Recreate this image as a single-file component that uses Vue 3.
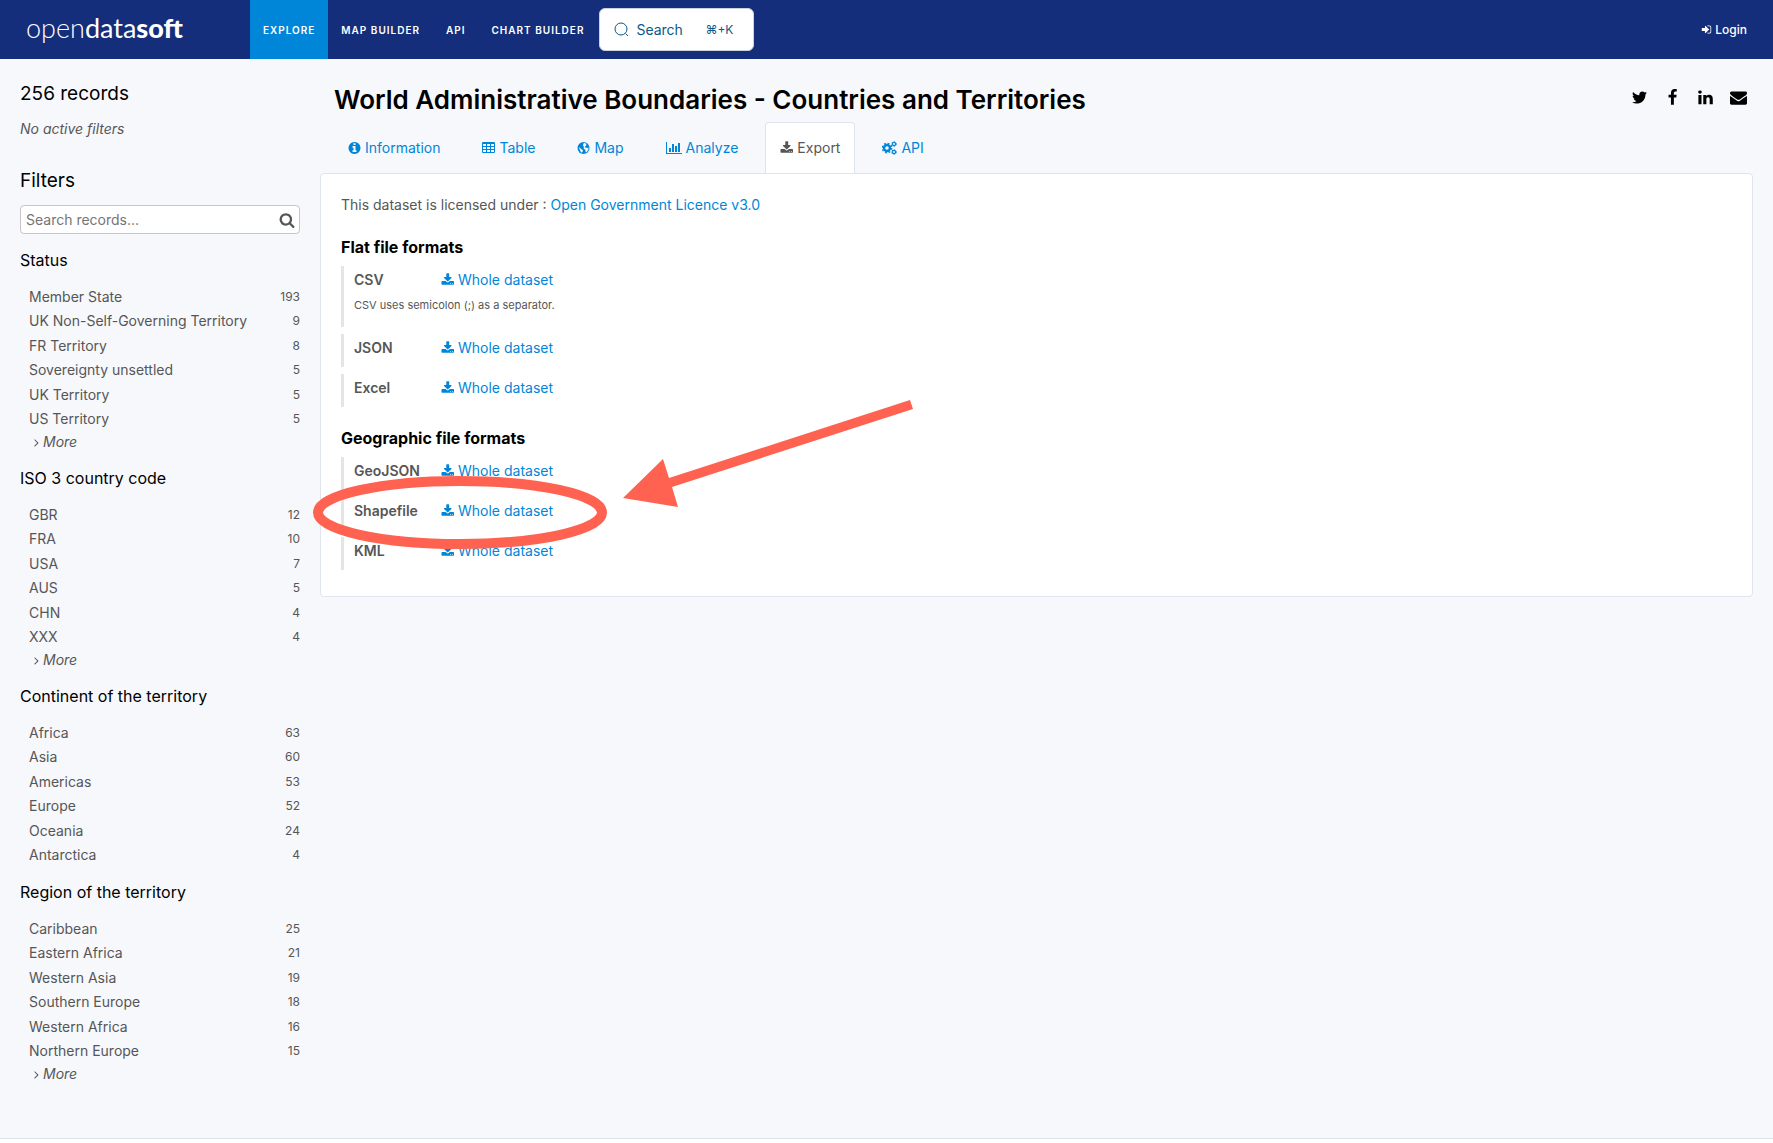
<script setup>
import { ref } from 'vue'

const query = ref('')

const icons = {
  twitter: 'M1684 408q-67 98-162 167 1 14 1 42 0 130-38 259.5t-115.5 248.5-184.5 210.5-258 146-323 54.5q-271 0-496-145 35 4 78 4 225 0 401-138-105-2-188-64.5t-114-159.5q33 5 61 5 43 0 85-11-112-23-185.5-111.5t-73.5-205.5v-4q68 38 146 41-66-44-105-115t-39-154q0-88 44-163 121 149 294.5 238.5t371.5 99.5q-8-38-8-74 0-134 94.5-228.5t228.5-94.5q140 0 236 102 109-21 205-78-37 115-142 178 93-10 186-50z',
  facebook: 'M1343 12v264h-157q-86 0-116 36t-30 108v189h293l-39 296h-254v759h-306v-759h-255v-296h255v-218q0-186 104-288.5t277-102.5q147 0 228 12z',
  linkedin: 'M477 625v991h-330v-991h330zm21-306q1 73-50.5 122t-135.5 49h-2q-82 0-132-49t-50-122q0-74 51.5-122.5t134.5-48.5 133 48.5 51 122.5zm1166 729v568h-329v-530q0-105-40.5-164.5t-126.5-59.5q-63 0-105.5 34.5t-63.5 85.5q-11 30-11 81v553h-329q2-399 2-647t-1-296l-1-48h329v144h-2q20-32 41-56t56.5-52 87-43.5 114.5-15.5q171 0 275 113.5t104 332.5z',
  envelope: 'M1792 710v794q0 66-47 113t-113 47h-1472q-66 0-113-47t-47-113v-794q44 49 101 87 362 246 497 345 57 42 92.5 65.5t94.5 48 110 24.5h2q51 0 110-24.5t94.5-48 92.5-65.5q170-123 498-345 57-39 100-87zm0-294q0 79-49 151t-122 123q-376 261-468 325-10 7-42.5 31t-54 38.5-52 32.5-57.5 27-50 9h-2q-23 0-50-9t-57.5-27-52-32.5-54-38.5-42.5-31q-91-64-262-182.5t-205-142.5q-62-42-117-115.5t-55-136.5q0-78 41.5-130t118.5-52h1472q65 0 112.5 47t47.5 113z',
  info: 'M1152 1376v-160q0-14-9-23t-23-9h-96v-512q0-14-9-23t-23-9h-320q-14 0-23 9t-9 23v160q0 14 9 23t23 9h96v320h-96q-14 0-23 9t-9 23v160q0 14 9 23t23 9h448q14 0 23-9t9-23zm-128-896v-160q0-14-9-23t-23-9h-192q-14 0-23 9t-9 23v160q0 14 9 23t23 9h192q14 0 23-9t9-23zm640 416q0 209-103 385.5t-279.5 279.5-385.5 103-385.5-103-279.5-279.5-103-385.5 103-385.5 279.5-279.5 385.5-103 385.5 103 279.5 279.5 103 385.5z',
  download: 'M1344 1344q0-26-19-45t-45-19-45 19-19 45 19 45 45 19 45-19 19-45zm256 0q0-26-19-45t-45-19-45 19-19 45 19 45 45 19 45-19 19-45zm128-224v320q0 40-28 68t-68 28h-1472q-40 0-68-28t-28-68v-320q0-40 28-68t68-28h465l135 136q58 56 136 56t136-56l136-136h464q40 0 68 28t28 68zm-325-569q17 41-14 70l-448 448q-18 19-45 19t-45-19l-448-448q-31-29-14-70 17-39 59-39h256v-448q0-26 19-45t45-19h256q26 0 45 19t19 45v448h256q42 0 59 39z',
  chart: 'M640 896v512h-256v-512h256zm384-512v1024h-256v-1024h256zm1024 1152v128h-2048v-1536h128v1408h1920zm-640-896v768h-256v-768h256zm384-384v1152h-256v-1152h256z',
  search: 'M1216 832q0-185-131.5-316.5t-316.5-131.5-316.5 131.5-131.5 316.5 131.5 316.5 316.5 131.5 316.5-131.5 131.5-316.5zm512 832q0 52-38 90t-90 38q-54 0-90-38l-343-342q-179 124-399 124-143 0-273.5-55.5t-225-150-150-225-55.5-273.5 55.5-273.5 150-225 225-150 273.5-55.5 273.5 55.5 225 150 150 225 55.5 273.5q0 220-124 399l343 343q37 37 37 90z',
  angle: 'M1171 960q0 13-10 23l-466 466q-10 10-23 10t-23-10l-50-50q-10-10-10-23t10-23l393-393-393-393q-10-10-10-23t10-23l50-50q10-10 23-10t23 10l466 466q10 10 10 23z',
  signin: 'M1312 896q0 26-19 45l-544 544q-19 19-45 19t-45-19-19-45v-288h-448q-26 0-45-19t-19-45v-384q0-26 19-45t45-19h448v-288q0-26 19-45t45-19 45 19l544 544q19 19 19 45zm352-352v704q0 119-84.5 203.5t-203.5 84.5h-320q-13 0-22.5-9.5t-9.5-22.5q0-4-1-20t-.5-26.5 3-23.5 10-19.5 20.5-6.5h320q66 0 113-47t47-113v-704q0-66-47-113t-113-47h-312l-11.5-1-11.5-3-8-5.5-7-9-2-13.5q0-4-1-20t-.5-26.5 3-23.5 10-19.5 20.5-6.5h320q119 0 203.5 84.5t84.5 203.5z',
}

const facets = [
  {
    title: 'Status',
    more: true,
    items: [['Member State', 193], ['UK Non-Self-Governing Territory', 9], ['FR Territory', 8], ['Sovereignty unsettled', 5], ['UK Territory', 5], ['US Territory', 5]],
  },
  {
    title: 'ISO 3 country code',
    more: true,
    items: [['GBR', 12], ['FRA', 10], ['USA', 7], ['AUS', 5], ['CHN', 4], ['XXX', 4]],
  },
  {
    title: 'Continent of the territory',
    more: false,
    items: [['Africa', 63], ['Asia', 60], ['Americas', 53], ['Europe', 52], ['Oceania', 24], ['Antarctica', 4]],
  },
  {
    title: 'Region of the territory',
    more: true,
    items: [['Caribbean', 25], ['Eastern Africa', 21], ['Western Asia', 19], ['Southern Europe', 18], ['Western Africa', 16], ['Northern Europe', 15]],
  },
]

const groups = [
  {
    title: 'Flat file formats',
    formats: [{ name: 'CSV', note: 'CSV uses semicolon (;) as a separator.' }, { name: 'JSON' }, { name: 'Excel' }],
  },
  {
    title: 'Geographic file formats',
    formats: [{ name: 'GeoJSON' }, { name: 'Shapefile' }, { name: 'KML' }],
  },
]

const shares = [
  { label: 'Twitter', icon: 'twitter' },
  { label: 'Facebook', icon: 'facebook' },
  { label: 'LinkedIn', icon: 'linkedin' },
  { label: 'Email', icon: 'envelope' },
]
</script>

<template>
  <div class="page">
    <header class="topbar">
      <a class="logo" href="#"><span class="logo-open">open</span><span class="logo-data">data</span><span class="logo-soft">soft</span></a>
      <nav class="menu">
        <a class="menu-item current" href="#">EXPLORE</a>
        <a class="menu-item" href="#">MAP BUILDER</a>
        <a class="menu-item" href="#">API</a>
        <a class="menu-item" href="#">CHART BUILDER</a>
      </nav>
      <button class="quick-search" type="button">
        <svg class="quick-icon" viewBox="0 0 15 15" aria-hidden="true">
          <circle cx="7" cy="7" r="6" />
          <path d="M11.6 11.6L14 14" />
        </svg>
        <span>Search</span>
        <span class="shortcut">⌘+K</span>
      </button>
      <a class="login" href="#">
        <svg class="login-icon" viewBox="0 0 1792 1792" aria-hidden="true"><path :d="icons.signin" /></svg>
        <span>Login</span>
      </a>
    </header>

    <div class="body">
      <aside class="sidebar">
        <h2 class="side-title">256 records</h2>
        <p class="no-filters">No active filters</p>
        <h2 class="side-title">Filters</h2>
        <form class="record-search" @submit.prevent>
          <input v-model="query" type="text" aria-label="Search records" placeholder="Search records..." />
          <button type="submit" aria-label="Search">
            <svg viewBox="0 0 1792 1792" aria-hidden="true"><path :d="icons.search" /></svg>
          </button>
        </form>
        <section v-for="facet in facets" :key="facet.title" class="facet">
          <h3>{{ facet.title }}</h3>
          <ul>
            <li v-for="[name, count] in facet.items" :key="name">
              <a href="#"><span>{{ name }}</span><span class="count">{{ count }}</span></a>
            </li>
          </ul>
          <a v-if="facet.more" class="more" href="#">
            <svg viewBox="0 0 1792 1792" aria-hidden="true"><path :d="icons.angle" /></svg>
            <span>More</span>
          </a>
        </section>
      </aside>

      <main class="content">
        <div class="heading">
          <h1>World Administrative Boundaries - Countries and Territories</h1>
          <div class="shares">
            <a v-for="s in shares" :key="s.icon" href="#" :aria-label="s.label">
              <svg viewBox="0 0 1792 1792" aria-hidden="true"><path :d="icons[s.icon]" /></svg>
            </a>
          </div>
        </div>

        <nav class="tabs">
          <a class="tab" href="#">
            <svg class="icon" viewBox="0 0 1536 1792" aria-hidden="true"><path transform="translate(-128 0)" :d="icons.info" /></svg>
            <span>Information</span>
          </a>
          <a class="tab" href="#">
            <svg class="icon" viewBox="0 0 13 14" aria-hidden="true">
              <path fill-rule="evenodd" d="M1 1h11a1 1 0 0 1 1 1v9a1 1 0 0 1-1 1H1a1 1 0 0 1-1-1V2a1 1 0 0 1 1-1zM1 3v2h3V3zM5 3v2h3V3zM9 3v2h3V3zM1 6v2h3V6zM5 6v2h3V6zM9 6v2h3V6zM1 9v2h3V9zM5 9v2h3V9zM9 9v2h3V9z" />
            </svg>
            <span>Table</span>
          </a>
          <a class="tab" href="#">
            <svg class="icon" viewBox="0 0 12 14" aria-hidden="true">
              <circle cx="6" cy="7" r="6" />
              <path class="land" d="M6.2 1.800L7.800 2.200 9.400 3.300 8.300 3.600 8.800 4.800 7.600 5.300 7.300 6.400 8.500 6.600 9.800 7.300 10.800 6.200 11 8 9.800 10.300 8.400 11.400 7.900 10 8 8.700 6.800 8.200 6.100 7 6.400 5.400 5.300 4.200 6 3zM1.200 6.200L2.600 7 3.800 8.200 5.400 9 5.200 10.400 4.400 11.800 3 10.600 2.400 8.800z" />
            </svg>
            <span>Map</span>
          </a>
          <a class="tab" href="#">
            <svg class="icon wide" viewBox="0 0 2048 1792" aria-hidden="true"><path :d="icons.chart" /></svg>
            <span>Analyze</span>
          </a>
          <a class="tab active" href="#">
            <svg class="icon" viewBox="0 0 1728 1792" aria-hidden="true"><path :d="icons.download" /></svg>
            <span>Export</span>
          </a>
          <a class="tab" href="#">
            <svg class="icon cogs" viewBox="0 0 15 14" aria-hidden="true">
              <circle cx="5" cy="7" r="3" stroke-width="2.4" />
              <circle cx="5" cy="7" r="4.7" stroke-width="1.4" stroke-dasharray="1.85 1.85" />
              <circle cx="12" cy="3" r="1.6" stroke-width="1.2" />
              <circle cx="12" cy="3" r="2.4" stroke-width="0.8" stroke-dasharray="1.25 1.25" />
              <circle cx="12" cy="11" r="1.6" stroke-width="1.2" />
              <circle cx="12" cy="11" r="2.4" stroke-width="0.8" stroke-dasharray="1.25 1.25" />
            </svg>
            <span>API</span>
          </a>
        </nav>

        <div class="card">
          <p class="license">This dataset is licensed under : <a href="#">Open Government Licence v3.0</a></p>
          <section v-for="group in groups" :key="group.title" class="group">
            <h3>{{ group.title }}</h3>
            <ul>
              <li v-for="format in group.formats" :key="format.name">
                <div class="format">
                  <span class="format-name">{{ format.name }}</span>
                  <a href="#">
                    <svg class="icon" viewBox="0 0 1728 1792" aria-hidden="true"><path :d="icons.download" /></svg>
                    <span>Whole dataset</span>
                  </a>
                </div>
                <p v-if="format.note" class="note">{{ format.note }}</p>
              </li>
            </ul>
          </section>
          <svg class="marker" viewBox="0 0 610 156" aria-hidden="true">
            <ellipse cx="150" cy="115.5" rx="142" ry="31.5" />
            <path d="M313 101L353 62L359 81L600 3L603 12L362 90L368 110Z" />
          </svg>
        </div>
      </main>
    </div>
  </div>
</template>

<style>
body {
  margin: 0;
  background: #fff;
}
</style>

<style scoped>
.page {
  font-family: Inter, "Liberation Sans", sans-serif;
  font-size: 14px;
  line-height: 20px;
  color: #565656;
}
a {
  color: #0086d8;
  text-decoration: none;
}
h1, h2, h3, p, ul {
  margin: 0;
  padding: 0;
  font-weight: 400;
}
ul {
  list-style: none;
}
h1, h2, h3 {
  color: #000;
}
svg {
  display: block;
  fill: currentColor;
}
.topbar {
  display: flex;
  align-items: center;
  height: 59px;
  background: #142e7b;
}
.logo {
  box-sizing: border-box;
  width: 250px;
  padding-left: 26px;
  padding-bottom: 4px;
  font-family: Lato, sans-serif;
  font-size: 27px;
  line-height: 32px;
  color: #fff;
}
.logo-open {
  font-weight: 300;
}
.logo-soft {
  font-weight: 900;
}
.menu {
  display: flex;
  align-self: stretch;
}
.menu-item {
  display: flex;
  align-items: center;
  padding: 0 13px;
  font-size: 10px;
  font-weight: 600;
  letter-spacing: 1px;
  color: #fff;
}
.menu-item.current {
  background: #0086d8;
}
.quick-search {
  display: flex;
  align-items: center;
  box-sizing: border-box;
  width: 155px;
  height: 43px;
  margin-left: 2px;
  padding: 0 20px 0 14px;
  border: 1px solid #cbd2db;
  border-radius: 6px;
  background: #fff;
  font: inherit;
  color: #0b5789;
}
.quick-icon {
  width: 15px;
  height: 15px;
  margin-right: 7px;
  fill: none;
  stroke: currentColor;
}
.shortcut {
  margin-left: auto;
  font-size: 12px;
}
.login {
  display: flex;
  align-items: center;
  gap: 3px;
  margin-left: auto;
  padding-right: 26px;
  font-size: 12px;
  font-weight: 500;
  color: #fff;
}
.login-icon {
  width: 11px;
  height: 11px;
}
.body {
  display: flex;
  gap: 20px;
  padding: 0 20px 39px;
  border-bottom: 1px solid #dfe2e8;
  background: #f6f8fc;
}
.sidebar {
  flex: 0 0 280px;
  padding-top: 22px;
}
.side-title {
  font-size: 19px;
  line-height: 26px;
}
.no-filters {
  margin: 12px 0 29px;
  font-style: italic;
}
.record-search {
  display: flex;
  align-items: center;
  margin: 11px 0 15px;
  border: 1px solid #c6c6c6;
  border-radius: 4px;
  background: #fff;
}
.record-search input {
  flex: 1;
  min-width: 0;
  height: 27px;
  padding: 0 5px;
  border: 0;
  background: none;
  font: inherit;
  outline: 0;
}
.record-search input::placeholder {
  color: #757575;
}
.record-search button {
  padding: 0 4px 0 0;
  border: 0;
  background: none;
  color: #565656;
}
.record-search svg {
  width: 16px;
  height: 16px;
}
.facet {
  padding-bottom: 14px;
}
.facet h3 {
  font-size: 16px;
  line-height: 22px;
}
.facet ul {
  display: grid;
  align-content: space-between;
  min-height: 146px;
  margin-top: 14px;
}
.facet li a {
  display: flex;
  justify-content: space-between;
  padding-left: 9px;
  line-height: 24px;
  color: #565656;
}
.count {
  font-size: 12px;
}
.more {
  display: flex;
  align-items: center;
  margin-left: 10px;
  line-height: 22px;
  font-style: italic;
  color: #565656;
}
.more svg {
  width: 13px;
  height: 13px;
}
.content {
  flex: 1;
  min-width: 0;
}
.heading {
  display: flex;
  justify-content: space-between;
  padding: 24px 6px 0 14px;
}
.heading h1 {
  font-size: 26px;
  font-weight: 600;
  line-height: 34px;
}
.shares {
  display: flex;
  gap: 16px;
  padding-top: 6px;
}
.shares a {
  color: #000;
}
.shares svg {
  width: 17px;
  height: 17px;
}
.tabs {
  display: flex;
  gap: 12px;
  padding: 5px 0 0 13px;
}
.tab {
  display: flex;
  align-items: center;
  gap: 4px;
  height: 50px;
  padding: 0 14px;
  border: 1px solid transparent;
  border-bottom: 0;
}
.tab.active {
  position: relative;
  z-index: 1;
  margin-bottom: -1px;
  border-color: #dee5ef;
  border-radius: 4px 4px 0 0;
  background: #fff;
  color: #565656;
}
.icon {
  width: 13px;
  height: 14px;
}
.icon.wide {
  width: 16px;
}
.icon.cogs {
  width: 15px;
  fill: none;
  stroke: currentColor;
}
.land {
  fill: #f6f8fc;
}
.card {
  position: relative;
  padding: 21px 20px 26px;
  border: 1px solid #dee5ef;
  border-radius: 4px;
  background: #fff;
}
.group {
  margin-top: 20px;
}
.group + .group {
  margin-top: 19px;
}
.group h3 {
  font-size: 16px;
  font-weight: 700;
  line-height: 24px;
}
.group ul {
  display: grid;
  gap: 7px;
  padding-top: 7px;
}
.group li {
  padding-left: 10px;
  border-left: 3px solid #e5e5e5;
}
.format {
  display: flex;
  align-items: center;
  height: 28px;
  padding-bottom: 5px;
}
.format-name {
  width: 87px;
  font-weight: 600;
}
.format a {
  display: flex;
  align-items: center;
  gap: 4px;
}
.note {
  height: 28px;
  font-size: 11px;
  line-height: 12px;
}
.marker {
  position: absolute;
  top: 223px;
  left: -11px;
  width: 610px;
  height: 156px;
  pointer-events: none;
  fill: #ff6250;
}
.marker ellipse {
  fill: none;
  stroke: #ff6250;
  stroke-width: 10px;
}
</style>
